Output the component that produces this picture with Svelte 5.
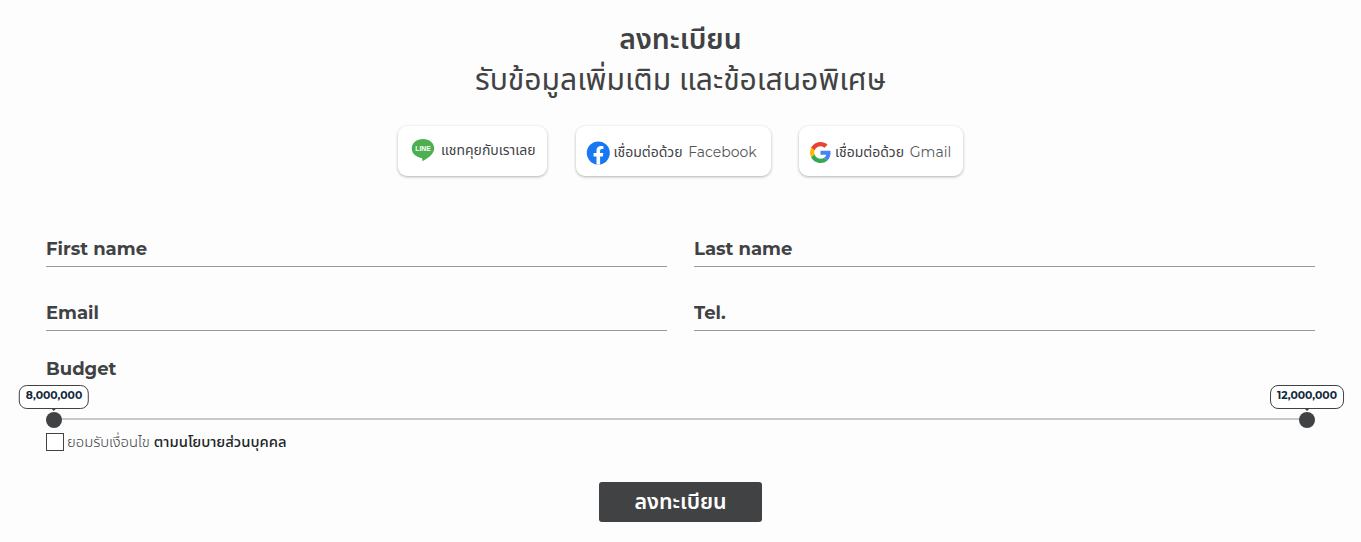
<script lang="ts">
  interface Field {
    id: string;
    label: string;
    type: string;
  }

  const fields: Field[] = [
    { id: 'first-name', label: 'First name', type: 'text' },
    { id: 'last-name', label: 'Last name', type: 'text' },
    { id: 'email', label: 'Email', type: 'email' },
    { id: 'tel', label: 'Tel.', type: 'tel' }
  ];

  let values: Record<string, string> = $state({});
  let accepted = $state(false);
  const budget = { min: 8000000, max: 12000000 };

  const format = (n: number) => n.toLocaleString('en-US');
</script>

<main class="register">
  <header>
    <h1>ลงทะเบียน</h1>
    <h2>รับข้อมูลเพิ่มเติม และข้อเสนอพิเศษ</h2>
  </header>

  <div class="social">
    <button type="button" class="social-btn line">
      <svg width="24" height="24" viewBox="0 0 24 24" aria-hidden="true">
        <path d="M12 1C5.6 1 .8 5.100.8 10.500c0 4.900 4 8.600 9.700 9.400.9.2.9.8.7 2.600 0 .5.400.6.9.3C17 20 23.200 16 23.200 10.500 23.200 5.100 18.400 1 12 1z" fill="#4caf50" />
        <text x="12" y="13.300" text-anchor="middle" textLength="15.500" lengthAdjust="spacingAndGlyphs">LINE</text>
      </svg>
      <span>แชทคุยกับเราเลย</span>
    </button>
    <button type="button" class="social-btn facebook">
      <svg width="24" height="24" viewBox="0 0 24 24" aria-hidden="true">
        <circle cx="12.300" cy="12" r="11.500" fill="#1877f2" />
        <path d="M10.500 23.400v-8H7.600V12h2.900V9.500c0-2.900 1.700-4.500 4.400-4.500 1.200 0 2.500.2 2.500.2v2.800h-1.400c-1.500 0-1.900.9-1.900 1.800V12h3.200l-.5 3.400h-2.700v8a12 12 0 0 1-3.600 0z" fill="#fff" />
      </svg>
      <span>เชื่อมต่อด้วย <i>Facebook</i></span>
    </button>
    <button type="button" class="social-btn gmail">
      <svg width="21" height="21" viewBox="0 0 48 48" aria-hidden="true">
        <path fill="#ea4335" d="M24 9.500c3.540 0 6.710 1.220 9.210 3.600l6.850-6.850C35.900 2.380 30.470 0 24 0 14.620 0 6.510 5.380 2.560 13.220l7.980 6.190C12.430 13.720 17.740 9.500 24 9.500z" />
        <path fill="#4285f4" d="M46.980 24.550c0-1.570-.15-3.090-.38-4.550H24v9.020h12.940c-.58 2.960-2.260 5.480-4.780 7.180l7.730 6c4.510-4.180 7.090-10.360 7.090-17.650z" />
        <path fill="#fbbc05" d="M10.530 28.590c-.48-1.450-.76-2.990-.76-4.590s.27-3.140.76-4.590l-7.980-6.190C.92 16.460 0 20.120 0 24c0 3.880.92 7.540 2.560 10.780l7.970-6.190z" />
        <path fill="#34a853" d="M24 48c6.480 0 11.930-2.130 15.890-5.810l-7.730-6c-2.150 1.450-4.920 2.300-8.160 2.300-6.260 0-11.570-4.220-13.470-9.910l-7.980 6.190C6.510 42.620 14.620 48 24 48z" />
      </svg>
      <span>เชื่อมต่อด้วย <i>Gmail</i></span>
    </button>
  </div>

  <form>
    <div class="fields">
      {#each fields as field (field.id)}
        <input
          type={field.type}
          placeholder={field.label}
          aria-label={field.label}
          bind:value={values[field.id]}
        />
      {/each}
    </div>

    <p class="budget-label">Budget</p>
    <div class="slider">
      <div class="handle"><span class="tip">{format(budget.min)}</span></div>
      <div class="handle"><span class="tip">{format(budget.max)}</span></div>
    </div>

    <label class="policy">
      <input type="checkbox" bind:checked={accepted} />
      <span class="accept">ยอมรับเงื่อนไข</span>
      <b>ตามนโยบายส่วนบุคคล</b>
    </label>

    <button type="button" class="submit">ลงทะเบียน</button>
  </form>
</main>

<style>
  :global(body) {
    background: #fdfdfd;
  }

  .register {
    box-sizing: border-box;
    height: 542px;
    padding: 19px 46px 0;
    overflow: hidden;
    color: #414244;
    font-family: Montserrat, Inter, "Noto Sans Thai", sans-serif;
  }

  header {
    text-align: center;
  }

  h1,
  h2 {
    margin: 0;
    height: 41px;
    line-height: 40px;
    white-space: nowrap;
  }

  h1 {
    font-size: 28.4px;
    font-weight: 600;
  }

  h2 {
    font-size: 30.1px;
    font-weight: 400;
  }

  .social {
    display: flex;
    justify-content: center;
    gap: 28.5px;
    margin-top: 25px;
  }

  .social-btn {
    display: flex;
    align-items: center;
    box-sizing: border-box;
    height: 50px;
    padding: 0;
    border: 0;
    border-radius: 9px;
    background: #fff;
    box-shadow: 0 1px 3px rgba(0, 0, 0, 0.3);
    color: #414244;
    font-family: inherit;
    font-size: 14px;
    font-weight: 400;
    white-space: nowrap;
  }

  .social-btn i {
    margin-left: 2px;
    color: #55565a;
    font-style: normal;
  }

  .social-btn text {
    fill: #fff;
    font-family: "Liberation Sans", sans-serif;
    font-size: 7.5px;
    font-weight: 700;
  }

  .line {
    width: 149px;
    padding: 0 0 2px 13px;
    gap: 6px;
  }

  .facebook {
    width: 195px;
    padding: 3px 0 0 10px;
    gap: 4px;
  }

  .gmail {
    width: 164px;
    padding: 2px 0 0 11px;
    gap: 4px;
  }

  .fields {
    display: grid;
    grid-template-columns: 1fr 1fr;
    gap: 28px 27px;
    margin-top: 55px;
  }

  .fields input {
    box-sizing: border-box;
    width: 100%;
    height: 36px;
    padding: 0;
    border: 0;
    border-bottom: 1px solid #999;
    outline: 0;
    background: transparent;
    color: #414244;
    font-family: inherit;
    font-size: 18px;
    font-weight: 700;
  }

  .fields input::placeholder {
    color: #414244;
    opacity: 1;
  }

  .budget-label {
    margin: 26px 0 0;
    font-size: 18px;
    font-weight: 700;
    line-height: 24px;
  }

  .slider {
    display: flex;
    justify-content: space-between;
    height: 16px;
    margin-top: 31px;
    background: linear-gradient(#c8c8c8, #c8c8c8) center 6px / 100% 2px no-repeat;
  }

  .handle {
    position: relative;
    width: 16px;
    height: 16px;
    border-radius: 50%;
    background: #414244;
  }

  .tip {
    position: absolute;
    bottom: 19px;
    left: 50%;
    transform: translateX(-50%);
    box-sizing: border-box;
    height: 24px;
    padding: 0 6px;
    border: 1px solid #414244;
    border-radius: 8px;
    background: #fff;
    color: #12283a;
    font-size: 10.8px;
    font-weight: 700;
    line-height: 19px;
    white-space: nowrap;
  }

  .tip::after {
    content: "";
    position: absolute;
    top: 100%;
    left: 50%;
    margin-left: -3px;
    border: 3px solid transparent;
    border-top-color: #414244;
    border-bottom: 0;
  }

  .policy {
    display: flex;
    align-items: center;
    height: 18px;
    margin-top: 5px;
    font-size: 14.8px;
  }

  .policy input {
    appearance: none;
    width: 18px;
    height: 18px;
    margin: 0 3px 0 0;
    border: 1px solid #414244;
    background: #fff;
  }

  .policy input:checked {
    background: #414244;
  }

  .accept {
    margin-right: 4px;
    font-weight: 300;
  }

  .policy b {
    color: #212529;
    font-weight: 500;
  }

  .submit {
    display: block;
    width: 163px;
    height: 40px;
    margin: 31px auto 0;
    padding: 0;
    border: 0;
    border-radius: 3px;
    background: #414244;
    color: #fff;
    font-family: inherit;
    font-size: 21.4px;
    font-weight: 600;
  }
</style>
